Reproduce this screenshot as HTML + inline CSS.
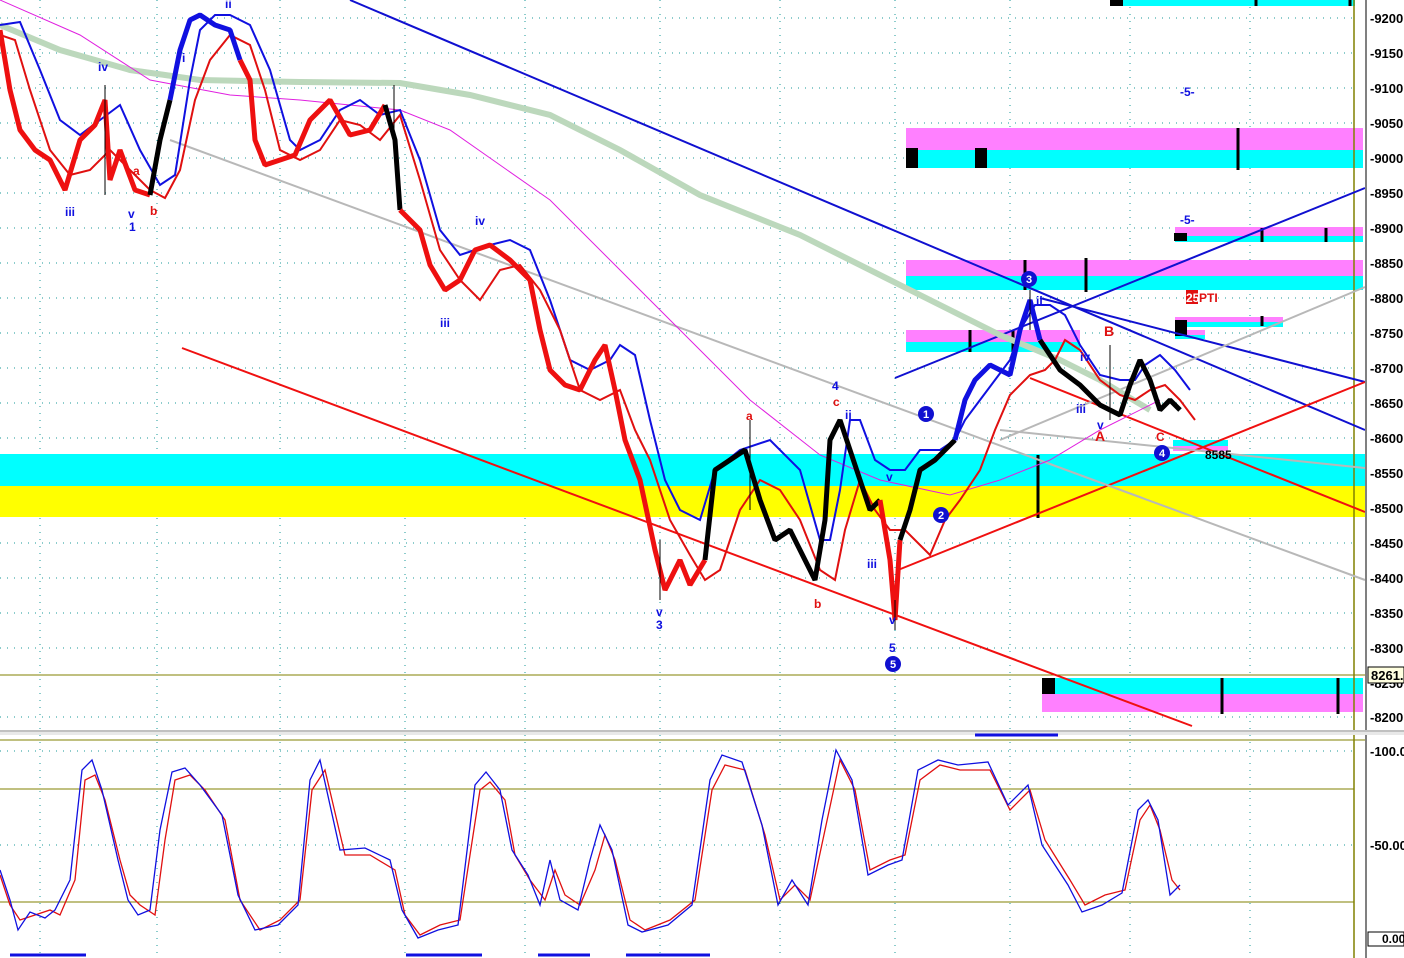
<!DOCTYPE html>
<html><head><meta charset="utf-8"><style>
html,body{margin:0;padding:0;background:#fff;width:1404px;height:958px;overflow:hidden}
svg{display:block}
text{font-family:"Liberation Sans",sans-serif;font-weight:bold}
</style></head><body>
<svg width="1404" height="958" viewBox="0 0 1404 958" xmlns="http://www.w3.org/2000/svg">
<rect width="1404" height="958" fill="#fff"/>
<g stroke="#1a9a9a" stroke-width="1" stroke-dasharray="1,6">
<line x1="0" y1="18" x2="1354" y2="18"/><line x1="0" y1="53" x2="1354" y2="53"/><line x1="0" y1="88" x2="1354" y2="88"/><line x1="0" y1="123" x2="1354" y2="123"/><line x1="0" y1="158" x2="1354" y2="158"/><line x1="0" y1="193" x2="1354" y2="193"/><line x1="0" y1="228" x2="1354" y2="228"/><line x1="0" y1="263" x2="1354" y2="263"/><line x1="0" y1="298" x2="1354" y2="298"/><line x1="0" y1="333" x2="1354" y2="333"/><line x1="0" y1="368" x2="1354" y2="368"/><line x1="0" y1="403" x2="1354" y2="403"/><line x1="0" y1="438" x2="1354" y2="438"/><line x1="0" y1="543" x2="1354" y2="543"/><line x1="0" y1="578" x2="1354" y2="578"/><line x1="0" y1="613" x2="1354" y2="613"/><line x1="0" y1="648" x2="1354" y2="648"/><line x1="0" y1="717" x2="1354" y2="717"/><line x1="0" y1="751" x2="1354" y2="751"/><line x1="0" y1="845" x2="1354" y2="845"/>
<line x1="40" y1="0" x2="40" y2="958"/><line x1="157" y1="0" x2="157" y2="958"/><line x1="280" y1="0" x2="280" y2="958"/><line x1="405" y1="0" x2="405" y2="958"/><line x1="525" y1="0" x2="525" y2="958"/><line x1="660" y1="0" x2="660" y2="958"/><line x1="780" y1="0" x2="780" y2="958"/><line x1="895" y1="0" x2="895" y2="958"/><line x1="1010" y1="0" x2="1010" y2="958"/><line x1="1130" y1="0" x2="1130" y2="958"/><line x1="1250" y1="0" x2="1250" y2="958"/>
</g>
<rect x="0" y="454" width="1365" height="32" fill="#00ffff"/>
<rect x="0" y="486" width="1365" height="31" fill="#ffff00"/>
<rect x="906" y="128" width="457" height="22" fill="#ff80ff"/><rect x="906" y="150" width="457" height="18" fill="#00ffff"/>
<rect x="906" y="148" width="12" height="20" fill="#000"/><rect x="975" y="148" width="12" height="20" fill="#000"/>
<rect x="906" y="260" width="457" height="16" fill="#ff80ff"/><rect x="906" y="276" width="457" height="14" fill="#00ffff"/>
<rect x="906" y="330" width="174" height="12" fill="#ff80ff"/><rect x="906" y="342" width="174" height="10" fill="#00ffff"/>
<rect x="1110" y="0" width="245" height="6" fill="#00ffff"/><rect x="1110" y="0" width="13" height="6" fill="#000"/>
<rect x="1175" y="227" width="188" height="9" fill="#ff80ff"/><rect x="1175" y="236" width="188" height="6" fill="#00ffff"/><rect x="1174" y="233" width="13" height="8" fill="#000"/>
<rect x="1175" y="317" width="108" height="5" fill="#ff80ff"/><rect x="1175" y="322" width="108" height="5" fill="#00ffff"/>
<rect x="1175" y="330" width="30" height="5" fill="#ff80ff"/><rect x="1175" y="335" width="30" height="4" fill="#00ffff"/>
<rect x="1175" y="320" width="12" height="16" fill="#000"/>
<rect x="1042" y="678" width="321" height="16" fill="#00ffff"/><rect x="1042" y="694" width="321" height="18" fill="#ff80ff"/><rect x="1042" y="678" width="13" height="16" fill="#000"/>
<rect x="1173" y="440" width="55" height="6" fill="#00ffff"/><rect x="1173" y="446" width="55" height="5" fill="#ff80ff"/>
<g stroke="#000" stroke-width="3">
<line x1="1238" y1="128" x2="1238" y2="170"/><line x1="1086" y1="258" x2="1086" y2="292"/><line x1="1262" y1="228" x2="1262" y2="242"/><line x1="1326" y1="228" x2="1326" y2="242"/><line x1="970" y1="330" x2="970" y2="352"/><line x1="1013" y1="330" x2="1013" y2="352"/><line x1="1038" y1="455" x2="1038" y2="518"/><line x1="1222" y1="678" x2="1222" y2="714"/><line x1="1338" y1="678" x2="1338" y2="714"/><line x1="1025" y1="260" x2="1025" y2="290"/><line x1="1256" y1="0" x2="1256" y2="6"/><line x1="1350" y1="0" x2="1350" y2="6"/><line x1="1262" y1="316" x2="1262" y2="326"/>
</g>
<line x1="0" y1="675" x2="1365" y2="675" stroke="#808000" stroke-width="1"/>
<line x1="1354" y1="0" x2="1354" y2="958" stroke="#808000" stroke-width="1.5"/>
<g fill="none" stroke-width="2">
<line x1="350" y1="0" x2="1365" y2="430" stroke="#1010d0"/>
<line x1="1040" y1="298" x2="1365" y2="382" stroke="#1010d0"/>
<line x1="895" y1="378" x2="1365" y2="188" stroke="#1010d0"/>
<line x1="182" y1="348" x2="1192" y2="726" stroke="#f01010"/>
<line x1="898" y1="570" x2="1365" y2="382" stroke="#f01010"/>
<line x1="1030" y1="378" x2="1365" y2="512" stroke="#f01010"/>
<line x1="170" y1="140" x2="1365" y2="580" stroke="#b8b8b8"/>
<line x1="1000" y1="440" x2="1365" y2="287" stroke="#b8b8b8"/>
<line x1="1000" y1="430" x2="1365" y2="468" stroke="#b8b8b8"/>
<polyline stroke="#bcd8bc" stroke-width="6" points="0,25 60,50 130,70 200,80 300,82 400,83 470,95 550,115 620,150 700,195 800,235 900,285 1000,335 1060,360 1100,380 1150,410"/>
<polyline stroke="#e020e0" stroke-width="1" points="0,0 80,35 150,80 230,95 300,100 400,110 450,130 550,200 650,300 750,400 820,455 880,480 950,495 1000,480 1050,460 1100,430 1160,400"/>
<polyline stroke="#1010e0" points="0,25 20,22 40,70 60,120 80,135 100,120 120,105 140,150 160,185 175,175 190,80 200,30 215,15 230,15 250,25 270,70 290,140 300,150 320,140 340,110 360,100 380,115 400,110 420,160 440,230 460,255 490,245 510,240 530,250 550,300 570,360 590,370 610,360 620,345 635,355 650,420 665,480 680,510 700,520 715,470 740,450 770,440 800,470 820,540 830,540 840,490 850,420 860,420 875,460 890,470 905,470 920,450 940,450 955,440 965,420 980,400 995,380 1010,360 1020,330 1035,305 1050,305 1065,315 1080,345 1100,375 1120,380 1135,380 1145,365 1160,355 1175,370 1190,390"/>
<polyline stroke="#e01010" points="0,35 15,40 30,90 50,150 70,175 90,170 110,150 130,170 150,190 165,198 180,170 195,100 210,60 230,35 250,45 265,90 280,150 300,160 320,150 340,120 360,125 380,140 400,115 420,180 440,250 460,280 480,300 500,270 520,265 540,290 560,330 580,390 600,400 620,390 635,430 650,460 670,520 690,555 705,580 720,570 740,510 760,480 780,490 800,520 820,570 835,580 845,530 860,480 875,510 890,530 905,530 920,545 930,555 945,520 960,500 980,470 995,430 1010,395 1030,375 1045,370 1055,360 1065,340 1080,350 1100,380 1120,395 1135,400 1150,390 1165,385 1180,400 1195,420"/>
</g>
<g fill="none" stroke-width="5" stroke-linejoin="bevel">
<polyline stroke="#ee1010" points="0,30 10,90 20,130 35,150 50,160 65,190 80,140 95,125 105,100 110,180 120,150 135,190 150,195"/>
<polyline stroke="#000" points="150,195 160,140 170,100"/>
<polyline stroke="#1010e0" points="170,100 180,50 190,20 200,15 215,25 230,30 240,60"/>
<polyline stroke="#ee1010" points="240,60 250,80 255,140 265,165 280,160 295,155 310,120 330,100 350,135 370,130 385,105"/>
<polyline stroke="#000" points="385,105 395,140 400,210"/>
<polyline stroke="#ee1010" points="400,210 420,230 430,265 445,290 460,280 475,250 490,245 510,260 530,280 540,330 550,370 565,385 580,390 595,360 605,345 615,390 625,440 640,480 655,550 665,590 680,560 690,585 705,560"/>
<polyline stroke="#000" points="705,560 715,470 730,460 745,450 760,500 775,540 790,530 800,550 815,580 825,520 830,440 840,420 850,450 860,480 870,510 880,500"/>
<polyline stroke="#ee1010" points="880,500 890,560 895,620 900,540"/>
<polyline stroke="#000" points="900,540 910,510 920,470 935,460 945,450 955,440"/>
<polyline stroke="#1010e0" points="955,440 965,400 975,380 990,365 1000,370 1010,375 1020,330 1030,300 1040,340"/>
<polyline stroke="#000" points="1040,340 1060,370 1080,385 1100,405 1120,415 1130,385 1140,360 1150,380 1160,410 1170,400 1180,410"/>
</g>
<g stroke="#000" stroke-width="1">
<line x1="105" y1="85" x2="105" y2="195"/><line x1="394" y1="85" x2="394" y2="150"/><line x1="750" y1="420" x2="750" y2="510"/><line x1="660" y1="540" x2="660" y2="600"/><line x1="895" y1="600" x2="895" y2="630"/><line x1="1110" y1="345" x2="1110" y2="420"/><line x1="1030" y1="290" x2="1030" y2="330"/>
</g>
<g font-size="12" fill="#1010e0">
<text x="98" y="71">iv</text><text x="65" y="216">iii</text><text x="128" y="218">v</text><text x="129" y="231">1</text><text x="182" y="62">i</text><text x="225" y="8">ii</text><text x="475" y="225">iv</text><text x="440" y="327">iii</text><text x="656" y="616">v</text><text x="656" y="629">3</text><text x="832" y="390">4</text><text x="845" y="419">ii</text><text x="867" y="568">iii</text><text x="886" y="481">v</text><text x="889" y="624">v</text><text x="889" y="652">5</text><text x="1036" y="305">ii</text><text x="1080" y="361">iv</text><text x="1076" y="413">iii</text><text x="1097" y="429">v</text><text x="1180" y="96" font-weight="normal">-5-</text><text x="1180" y="224" font-weight="normal">-5-</text>
</g>
<g font-size="12" fill="#e01010">
<text x="133" y="175">a</text><text x="150" y="215">b</text><text x="746" y="420">a</text><text x="833" y="406">c</text><text x="814" y="608">b</text><text x="1104" y="336" font-size="14">B</text><text x="1095" y="441" font-size="14">A</text><text x="1156" y="441">C</text>
</g>
<rect x="1186" y="290" width="12" height="14" fill="#e01010"/><text x="1186" y="302" font-size="12" fill="#fff">25</text><text x="1199" y="302" font-size="12" fill="#e01010">PTI</text>
<g font-size="11" fill="#fff" text-anchor="middle">
<circle cx="926" cy="414" r="8" fill="#1010d0"/><text x="926" y="418">1</text>
<circle cx="941" cy="515" r="8" fill="#1010d0"/><text x="941" y="519">2</text>
<circle cx="1029" cy="279" r="8" fill="#1010d0"/><text x="1029" y="283">3</text>
<circle cx="1162" cy="453" r="8" fill="#1010d0"/><text x="1162" y="457">4</text>
<circle cx="893" cy="664" r="8" fill="#1010d0"/><text x="893" y="668">5</text>
</g>
<text x="1205" y="459" font-size="12" fill="#000" font-weight="normal">8585</text>
<rect x="1365" y="0" width="39" height="958" fill="#fff"/>
<line x1="1366" y1="0" x2="1366" y2="958" stroke="#000" stroke-width="1"/>
<g font-size="13" fill="#000" font-weight="normal">
<text x="1370" y="23">-9200.</text><text x="1370" y="58">-9150.</text><text x="1370" y="93">-9100.</text><text x="1370" y="128">-9050.</text><text x="1370" y="163">-9000.</text><text x="1370" y="198">-8950.</text><text x="1370" y="233">-8900.</text><text x="1370" y="268">-8850.</text><text x="1370" y="303">-8800.</text><text x="1370" y="338">-8750.</text><text x="1370" y="373">-8700.</text><text x="1370" y="408">-8650.</text><text x="1370" y="443">-8600.</text><text x="1370" y="478">-8550.</text><text x="1370" y="513">-8500.</text><text x="1370" y="548">-8450.</text><text x="1370" y="583">-8400.</text><text x="1370" y="618">-8350.</text><text x="1370" y="653">-8300.</text><text x="1370" y="688">-8250.</text><text x="1370" y="722">-8200.</text>
<text x="1370" y="756">-100.0</text><text x="1370" y="850">-50.00</text>
</g>
<rect x="1368" y="667" width="36" height="16" fill="#ffffe0" stroke="#000"/>
<text x="1371" y="680" font-size="13" fill="#000" font-weight="normal">8261.5</text>
<rect x="1368" y="932" width="36" height="14" fill="#fff" stroke="#000"/>
<text x="1382" y="943" font-size="12" fill="#000">0.00</text>
<rect x="0" y="730" width="1404" height="5" fill="#e8e8e8"/>
<line x1="0" y1="731" x2="1404" y2="731" stroke="#999"/>
<line x1="0" y1="740" x2="1365" y2="740" stroke="#808000"/>
<line x1="0" y1="789" x2="1354" y2="789" stroke="#808000"/>
<line x1="0" y1="902" x2="1354" y2="902" stroke="#808000"/>
<line x1="975" y1="735" x2="1058" y2="735" stroke="#1010e0" stroke-width="3"/>
<g fill="none" stroke-width="1.3">
<polyline stroke="#e01010" points="0,875 10,905 20,920 35,915 50,910 60,915 75,880 85,780 95,775 105,800 120,860 130,895 140,905 155,915 165,840 175,780 190,775 205,790 225,820 240,900 260,930 280,920 300,900 312,790 325,770 345,855 370,855 395,870 405,915 420,935 440,925 460,920 480,790 490,782 505,800 515,855 530,880 545,900 555,870 565,895 580,905 595,870 605,835 615,860 630,920 645,930 670,920 695,900 712,790 725,765 745,770 765,835 780,900 795,885 810,900 825,830 840,760 855,790 870,870 890,860 905,855 920,780 940,765 960,770 990,770 1010,810 1030,790 1045,840 1070,880 1085,905 1105,895 1125,890 1140,820 1150,805 1160,830 1172,880 1180,890"/>
<polyline stroke="#1010e0" points="0,870 10,900 18,930 30,912 45,918 55,910 70,880 82,770 92,760 102,790 118,860 128,900 138,915 150,910 160,830 172,772 185,768 200,785 222,815 238,895 255,930 278,925 298,905 310,780 320,760 340,850 365,848 390,860 402,910 418,938 438,930 458,925 475,785 486,772 500,790 512,850 528,875 540,905 550,860 560,900 578,910 590,860 600,825 612,850 628,925 642,932 668,925 692,905 710,780 722,755 742,762 762,825 778,905 792,880 808,905 822,820 836,750 852,780 868,875 888,865 902,860 918,770 938,760 958,765 988,762 1008,805 1028,785 1042,845 1068,885 1082,912 1102,905 1122,893 1138,810 1148,800 1158,820 1170,895 1180,885"/>
</g>
<g stroke="#1010e0" stroke-width="3">
<line x1="10" y1="955" x2="86" y2="955"/><line x1="406" y1="955" x2="482" y2="955"/><line x1="538" y1="955" x2="590" y2="955"/><line x1="626" y1="955" x2="710" y2="955"/>
</g>
</svg>
</body></html>
